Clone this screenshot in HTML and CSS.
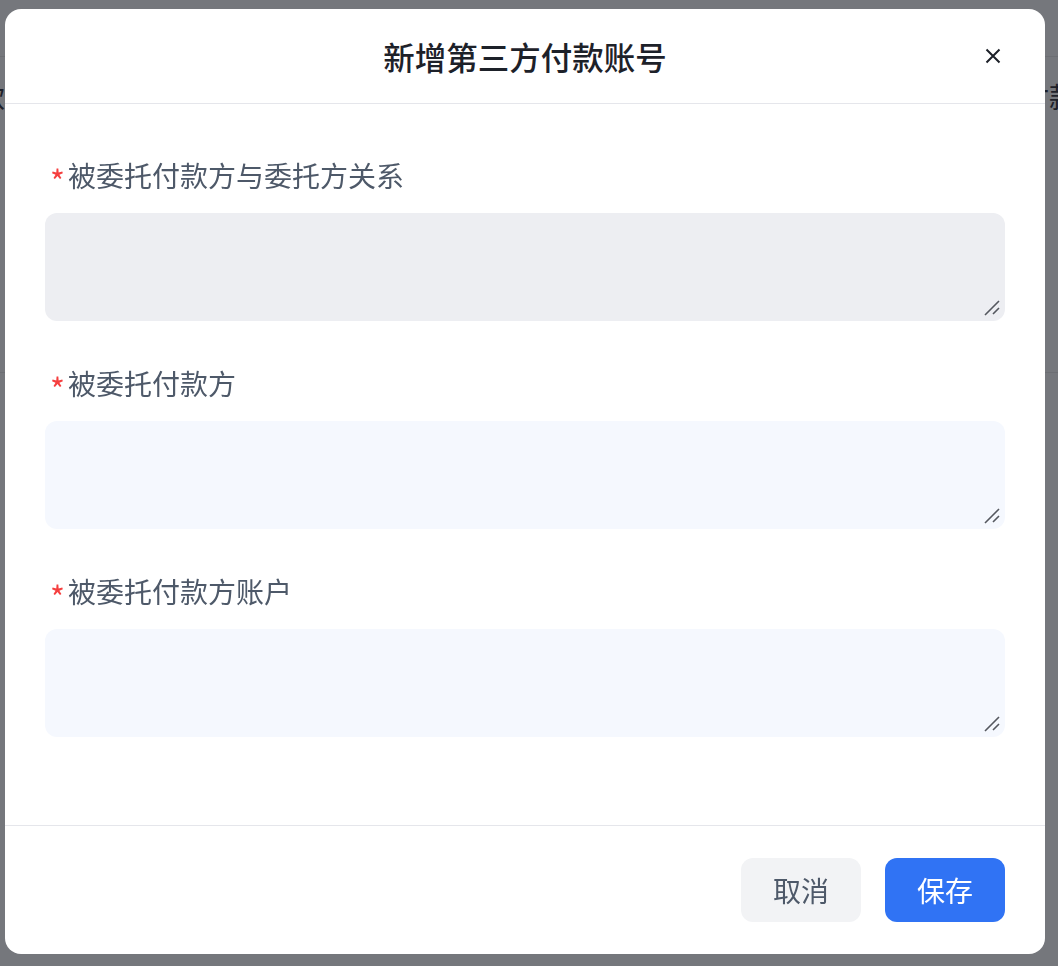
FILE: index.html
```html
<html>
  <head>
    <meta charset="utf-8">
    <link rel="stylesheet" href="styles.css">
  </head>
  <body>
    <div class="page">
      <div class="page-top"></div>
      <div class="page-row">
        <span class="cell cell-left">付款</span>
        <span class="cell cell-right">付款</span>
      </div>
    </div>
    <div class="mask"></div>
    <div class="modal">
      <div class="modal-head">
        <span></span>
        <h2 class="modal-title">新增第三方付款账号</h2>
        <button class="modal-close" aria-label="关闭">
          <svg width="16" height="16" viewBox="0 0 16 16">
            <path d="M1.5 1.5 L14.5 14.5 M14.5 1.5 L1.5 14.5" stroke="#1d2129" stroke-width="2" fill="none"/>
          </svg>
        </button>
      </div>
      <div class="modal-body">
        <div class="field">
          <label class="field-label"><span class="req">*</span>被委托付款方与委托方关系</label>
          <div class="input-wrap">
            <textarea class="field-input is-locked" readonly></textarea>
            <svg class="grip" width="20" height="20" viewBox="0 0 20 20">
              <path d="M2 16 L16 2 M10 15 L16 9" stroke="#55585f" stroke-width="1.6" fill="none"/>
            </svg>
          </div>
        </div>
        <div class="field">
          <label class="field-label"><span class="req">*</span>被委托付款方</label>
          <div class="input-wrap">
            <textarea class="field-input"></textarea>
            <svg class="grip" width="20" height="20" viewBox="0 0 20 20">
              <path d="M2 16 L16 2 M10 15 L16 9" stroke="#55585f" stroke-width="1.6" fill="none"/>
            </svg>
          </div>
        </div>
        <div class="field">
          <label class="field-label"><span class="req">*</span>被委托付款方账户</label>
          <div class="input-wrap">
            <textarea class="field-input"></textarea>
            <svg class="grip" width="20" height="20" viewBox="0 0 20 20">
              <path d="M2 16 L16 2 M10 15 L16 9" stroke="#55585f" stroke-width="1.6" fill="none"/>
            </svg>
          </div>
        </div>
      </div>
      <div class="modal-foot">
        <button class="btn btn-cancel">取消</button>
        <button class="btn btn-primary">保存</button>
      </div>
    </div>
  </body>
</html>
```

FILE: styles.css
```css
body {
  margin: 0;
  font-family: "Noto Sans CJK SC", "Noto Sans", sans-serif;
  background: #fff;
  overflow: hidden;
}
.page {
  width: 1058px;
  height: 966px;
  background: #fff;
}
.page-top {
  height: 56px;
  border-bottom: 1px solid #e8e8e8;
}
.page-row {
  height: 316px;
  box-sizing: border-box;
  padding-top: 19px;
  border-bottom: 1px solid #e8e8e8;
  display: flex;
  justify-content: space-between;
}
.cell {
  font-size: 28px;
  line-height: 40px;
  height: 40px;
  color: #1d2129;
}
.cell-left {
  margin-left: -51px;
}
.cell-right {
  margin-right: -19px;
}
.mask {
  position: fixed;
  inset: 0;
  background: rgba(29, 33, 41, 0.61);
}
.modal {
  position: fixed;
  left: 5px;
  top: 9px;
  width: 1040px;
  height: 945px;
  background: #fff;
  border-radius: 16px;
  display: flex;
  flex-direction: column;
}
.modal-head {
  height: 95px;
  box-sizing: border-box;
  border-bottom: 1px solid #e5e6eb;
  display: grid;
  grid-template-columns: 1fr auto 1fr;
  align-items: center;
}
.modal-title {
  margin: 0;
  font-size: 31.5px;
  font-weight: 500;
  color: #1d2129;
  line-height: 44px;
}
.modal-close {
  justify-self: end;
  margin-right: 44px;
  width: 16px;
  height: 16px;
  padding: 0;
  border: none;
  background: none;
  display: flex;
}
.modal-body {
  flex: 1;
  padding: 51px 40px 0;
}
.field {
  margin-bottom: 42px;
}
.field-label {
  display: flex;
  align-items: center;
  padding-left: 5px;
  font-size: 28px;
  line-height: 40px;
  height: 40px;
  margin-bottom: 18px;
  color: #4e5969;
}
.req {
  color: #f53f3f;
  font-size: 32px;
  line-height: 40px;
  height: 40px;
  margin-right: 3px;
  padding-top: 5px;
  box-sizing: border-box;
}
.input-wrap {
  position: relative;
}
.field-input {
  display: block;
  width: 100%;
  height: 108px;
  box-sizing: border-box;
  border: none;
  border-radius: 12px;
  background: #f5f8fe;
  resize: none;
  outline: none;
  font-family: inherit;
  font-size: 28px;
  padding: 12px 20px;
}
.field-input.is-locked {
  background: #edeef2;
}
.grip {
  position: absolute;
  right: 2px;
  bottom: 2px;
  pointer-events: none;
}
.modal-foot {
  height: 129px;
  box-sizing: border-box;
  border-top: 1px solid #e5e6eb;
  display: flex;
  align-items: center;
  justify-content: flex-end;
  gap: 24px;
  padding: 0 40px 0 0;
}
.btn {
  width: 120px;
  height: 64px;
  border: none;
  border-radius: 12px;
  font-family: inherit;
  font-size: 28px;
  cursor: pointer;
}
.btn-cancel {
  background: #f2f3f5;
  color: #4e5969;
}
.btn-primary {
  background: #3073f4;
  color: #fff;
}
```
